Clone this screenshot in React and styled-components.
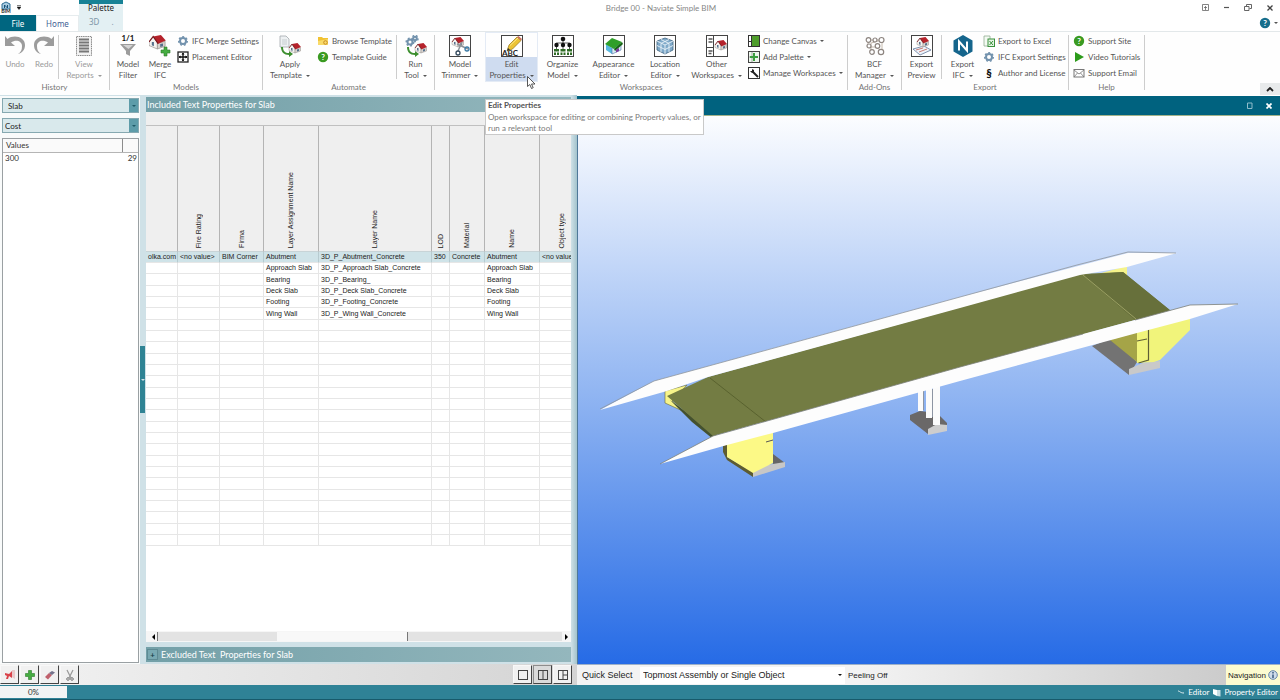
import React, { useState } from "react";
import styled, { createGlobalStyle, css } from "styled-components";

const GlobalStyle = createGlobalStyle`
  * {
    box-sizing: border-box;
  }
  body {
    margin: 0;
    background: #ffffff;
    font-family: Lato, "Open Sans", sans-serif;
    font-size: 8px;
    color: #4a4a4a;
  }
  button, select {
    font: inherit;
    color: inherit;
    border: none;
    background: none;
    padding: 0;
    margin: 0;
  }
  svg {
    display: block;
    flex-shrink: 0;
  }
`;

const Window = styled.div`
  display: flex;
  flex-direction: column;
  height: 100vh;
  overflow: hidden;
`;

/* ---------- title bar and tabs ---------- */

const Header = styled.header`
  display: flex;
  height: 31px;
  flex-shrink: 0;
`;

const HeaderSide = styled.div`
  display: flex;
  flex-direction: column;
  justify-content: space-between;
  width: ${(props) => props.$width}px;
`;

const QuickBar = styled.div`
  display: flex;
  align-items: center;
  gap: 5px;
  height: 15px;
`;

const TabRow = styled.nav`
  display: flex;
  height: 16px;
`;

const Tab = styled.button`
  width: ${(props) => (props.$file ? 36 : 43)}px;
  font-family: "Noto Sans", sans-serif;
  color: ${(props) => (props.$file ? "#ffffff" : "#3f6294")};
  background: ${(props) => (props.$file ? "#006680" : "#ffffff")};
  border: ${(props) => (props.$file ? "none" : "1px solid #e6ecee")};
  border-bottom: none;
`;

const PaletteGroup = styled.div`
  display: flex;
  flex-direction: column;
  width: 44px;
  font-family: "Noto Sans", sans-serif;
  background: #e3f0f3;
  border-top: 4px solid #178296;
`;

const PaletteTitle = styled.span`
  height: 11px;
  line-height: 8px;
  text-align: center;
  color: #222222;
`;

const PaletteTab = styled.button`
  display: flex;
  gap: 12px;
  padding: 4px 10px;
  line-height: 10px;
  color: #7d97a8;
`;

const AppTitle = styled.h1`
  flex: 1;
  margin: 0;
  height: 16px;
  line-height: 16px;
  font-size: 8px;
  font-weight: 400;
  text-align: center;
  color: #868686;
`;

const WindowButtons = styled.div`
  display: flex;
  justify-content: space-between;
  align-items: center;
  height: 15px;
  padding: 0 7px 0 3px;
`;

const HelpRow = styled.div`
  display: flex;
  justify-content: flex-end;
  align-items: center;
  gap: 3px;
  height: 16px;
  padding-right: 2px;
`;

/* ---------- ribbon ---------- */

const Ribbon = styled.div`
  display: flex;
  position: relative;
  height: 64px;
  flex-shrink: 0;
  border-top: 1px solid #e3e8ea;
  background: #fefefe;
`;

const Group = styled.section`
  display: flex;
  flex-direction: column;
  flex-shrink: 0;
  width: ${(props) => props.$width}px;
`;

const GroupBody = styled.div`
  display: flex;
  height: 50px;
`;

const GroupLabel = styled.span`
  line-height: 11px;
  text-align: center;
  color: #757575;
`;

const Divider = styled.div`
  width: 1px;
  height: ${(props) => (props.$short ? 44 : 55)}px;
  margin-top: 3px;
  flex-shrink: 0;
  background: #cdcdcd;
`;

const BigButton = styled.button`
  display: flex;
  flex-direction: column;
  align-items: center;
  flex-shrink: 0;
  width: ${(props) => props.$width}px;
  padding-top: 2px;
  line-height: 11px;
  text-align: center;
  white-space: nowrap;
  color: ${(props) => (props.$muted ? "#9a9a9a" : "#555555")};
  ${(props) =>
    props.$active &&
    css`
      background: linear-gradient(#fefefe 25px, #cfdcf0 25px);
      box-shadow: inset 0 0 0 1px #e4ebf5;
    `}
`;

const BigIcon = styled.span`
  display: flex;
  justify-content: center;
  align-items: center;
  width: 24px;
  height: 24px;
  margin-bottom: 1px;
`;

const Caption = styled.span`
  display: flex;
  align-items: center;
  gap: 4px;
`;

const Stack = styled.div`
  display: flex;
  flex-direction: column;
  padding: 1px 0 0 ${(props) => props.$indent || 0}px;
`;

const SmallButton = styled.button`
  display: flex;
  align-items: center;
  gap: 3px;
  height: 16px;
  white-space: nowrap;
  color: #555555;
`;

const Arrow = styled.i`
  border: 2px solid transparent;
  border-top-color: ${(props) => props.$color || "#555555"};
  border-bottom: none;
`;

const Collapse = styled.button`
  display: flex;
  align-items: center;
  justify-content: center;
  align-self: flex-end;
  margin-left: auto;
  width: 20px;
  height: 12px;
  background: #e8eaeb;
`;

/* ---------- work area ---------- */

const Main = styled.main`
  display: flex;
  flex: 1;
  min-height: 0;
`;

const Workspace = styled.div`
  display: flex;
  flex-direction: column;
  width: 577px;
  flex-shrink: 0;
  background: #cfe1e7;
`;

const Panels = styled.div`
  display: flex;
  flex: 1;
  min-height: 0;
`;

const ValuesPanel = styled.aside`
  display: flex;
  flex-direction: column;
  gap: 5px;
  width: 140px;
  padding: 2px 1px 1px 2px;
  background: #f9fbfb;
  border-top: 1px solid #cfe1e7;
`;

const ComboBox = styled.div`
  display: flex;
  height: 15px;
  border: 1px solid #86a9b1;
  background: #d9e9ec;
`;

const Combo = styled.select`
  appearance: none;
  flex: 1;
  padding-left: ${(props) => props.$indent}px;
  color: #222222;
`;

const ComboArrow = styled.span`
  display: flex;
  align-items: center;
  justify-content: center;
  width: 9px;
  background: #5d9ca9;
`;

const ValuesBox = styled.div`
  flex: 1;
  background: #ffffff;
  border: 1px solid #9aa0a3;
`;

const ValuesTable = styled.table`
  width: 100%;
  border-collapse: collapse;
  color: #333333;
  th {
    height: 13px;
    padding: 0 3px;
    font-weight: 400;
    text-align: left;
    background: #fafafa;
    border-bottom: 1px solid #b5b5b5;
  }
  th + th {
    width: 16px;
    border-left: 1px solid #8c8c8c;
  }
  td {
    height: 11px;
    padding: 0 2px;
  }
  td + td {
    text-align: right;
    padding: 0 1px;
  }
`;

const Splitter = styled.div`
  display: flex;
  align-items: center;
  width: 6px;
  background: ${(props) => (props.$shaded ? "linear-gradient(90deg, #cfe1e7, #a3c3cc)" : "#cfe1e7")};
`;

const SplitHandle = styled.div`
  display: flex;
  align-items: center;
  justify-content: center;
  width: 5px;
  height: 67px;
  background: #2f8394;
`;

const PropertiesPanel = styled.section`
  display: flex;
  flex-direction: column;
  flex: 1;
  min-width: 0;
  padding-top: 2px;
`;

const PanelTitle = styled.h2`
  display: flex;
  align-items: center;
  gap: 3px;
  margin: 0;
  height: 15px;
  padding-left: 1px;
  flex-shrink: 0;
  font-size: 9px;
  font-weight: 400;
  color: #ffffff;
  background: linear-gradient(90deg, #73a0a8, #94b7bd);
`;

const ExpandButton = styled.button`
  width: 11px;
  height: 11px;
  font-size: 8px;
  font-weight: 700;
  line-height: 8px;
  color: #173f48;
  background: #79a9b2;
  border: 1px solid #5e8b94;
`;

const GridArea = styled.div`
  flex: 1;
  min-height: 0;
  overflow: hidden;
  background: #ffffff;
  border-top: 13px solid #efefef;
`;

const PropertyTable = styled.table`
  table-layout: fixed;
  width: 438px;
  border-collapse: separate;
  border-spacing: 0;
  font-family: "Liberation Sans", Arial, sans-serif;
  font-size: 7px;
  color: #222222;
  border-top: 1px solid #c0c0c0;
  tbody tr {
    height: 11px;
  }
  tbody tr:nth-child(3n) {
    height: 12px;
  }
`;

const HeadCell = styled.th`
  width: ${(props) => props.$width}px;
  height: 126px;
  padding: 0 0 3px;
  vertical-align: bottom;
  font-weight: 400;
  background: #efefef;
  border-right: 1px solid #b4b4b4;
  border-bottom: 1px solid #c8d4d7;
`;

const Rotated = styled.span`
  display: block;
  margin: 0 auto;
  writing-mode: vertical-rl;
  transform: rotate(180deg);
  line-height: 10px;
  width: 10px;
  white-space: nowrap;
`;

const Cell = styled.td`
  padding: 0 0 0 2px;
  line-height: 10px;
  white-space: nowrap;
  background: ${(props) => (props.$selected ? "#cfe3e8" : "#ffffff")};
  border-right: 1px solid ${(props) => (props.$selected ? "#b7cbd0" : "#e6e6e6")};
  border-bottom: 1px solid #e6e6e6;
`;

const ScrollBar = styled.div`
  display: flex;
  align-items: center;
  height: 11px;
  padding: 0 1px 0 3px;
  background: #f6f6f6;
`;

const ScrollArrow = styled.button`
  width: 8px;
  height: 9px;
  display: flex;
  align-items: center;
  justify-content: center;
`;

const ScrollTrack = styled.div`
  flex: 1;
  display: flex;
  height: 9px;
  padding: 0 154px 0 119px;
  background: #e3e3e3;
  border-left: 1px solid #777777;
`;

const ScrollThumb = styled.div`
  flex: 1;
  background: #f8f8f8;
  border-right: 1px solid #777777;
`;

const Excluded = styled.div`
  padding: 5px 0 2px;
`;

const BottomBar = styled.div`
  display: flex;
  align-items: center;
  gap: 1px;
  height: 21px;
  padding-right: 5px;
  flex-shrink: 0;
  background: linear-gradient(90deg, #f3f3f3, #d4d4d4);
`;

const ToolButton = styled.button`
  display: flex;
  align-items: center;
  justify-content: center;
  width: 19px;
  height: 19px;
  background: ${(props) => (props.$pressed ? "#dadada" : "#f1f1f1")};
  border: 1px solid ${(props) => (props.$pressed ? "#8d8d8d" : "#f8f8f8")};
  border-right-color: #444444;
  border-bottom-color: #444444;
`;

const Spacer = styled.div`
  flex: 1;
`;

const Viewer = styled.section`
  display: flex;
  flex-direction: column;
  flex: 1;
  min-width: 0;
  padding-top: 1px;
`;

const ViewerTitle = styled.div`
  display: flex;
  align-items: center;
  justify-content: flex-end;
  gap: 13px;
  height: 20px;
  padding-right: 8px;
  flex-shrink: 0;
  background: #00627f;
  border-bottom: 1px solid #a3b38a;
`;

const Canvas = styled.div`
  flex: 1;
  min-height: 0;
  background: linear-gradient(#fcfdff, #92b6f2 50%, #266be6);
  border-left: 1px solid #4f7899;
  svg {
    width: 100%;
    height: 100%;
  }
`;

const ViewerBar = styled.div`
  display: flex;
  align-items: center;
  height: 21px;
  flex-shrink: 0;
  padding-left: 5px;
  border-top: 1px solid #9db0c8;
  font-family: "Liberation Sans", Arial, sans-serif;
  color: #222222;
  background: linear-gradient(90deg, #f3f3f3 40%, #c6c6c6);
`;

const QuickLabel = styled.label`
  width: 58px;
  font-size: 9px;
`;

const QuickBox = styled.div`
  display: flex;
  align-items: center;
  width: 205px;
  height: 17px;
  margin-right: 3px;
  padding-right: 3px;
  background: #ffffff;
`;

const QuickSelect = styled.select`
  appearance: none;
  flex: 1;
  padding-left: 3px;
  font-size: 9px;
`;

const NavButton = styled.button`
  display: flex;
  align-items: center;
  justify-content: center;
  gap: 2px;
  width: 54px;
  height: 20px;
  margin-left: auto;
  background: #fcfbd0;
`;

const StatusBar = styled.footer`
  display: flex;
  align-items: center;
  gap: 3px;
  height: 15px;
  flex-shrink: 0;
  padding-right: 2px;
  color: #ffffff;
  background: #2f8296;
  border-bottom: 1px solid #175a6b;
`;

const Progress = styled.div`
  width: 67px;
  height: 12px;
  line-height: 12px;
  text-align: center;
  color: #333333;
  background: #f2f4f4;
`;

const Tooltip = styled.div`
  position: absolute;
  left: 485px;
  top: 67px;
  width: 219px;
  padding-left: 2px;
  z-index: 2;
  line-height: 11px;
  white-space: nowrap;
  color: #7a7a7a;
  background: #ffffff;
  border: 1px solid #c9c9c9;
  strong {
    display: block;
    margin-bottom: 1px;
    color: #555555;
  }
`;

const Pointer = styled.span`
  position: absolute;
  left: 527px;
  top: 44px;
  z-index: 3;
`;

/* ---------- icons ---------- */

const House = ({ x = 0, y = 0 }) => (
  <g transform={`translate(${x} ${y})`}>
    <path d="M0 5l3-3.500 3 4V10L0 7.500z" fill="#f6f3f0" stroke="#96908d" strokeWidth=".5" />
    <path d="M6 6l5.500-1.500V8L6 10z" fill="#d8d2ce" stroke="#96908d" strokeWidth=".5" />
    <path d="M3 1l5.500-1L12 4 6.500 6.200z" fill="#b5222b" />
    <path d="M0 5l3-4 3.500 5.200" fill="none" stroke="#7a141b" strokeWidth=".8" />
    <path d="M2 5h1.500v3L2 7.300zM8 6.500l2-.5v2l-2 .6z" fill="#55708c" />
  </g>
);

const GreenArrow = () => (
  <path d="M4 12c0 4 2 6 6 6v-2l4 3-4 3v-2c-5 0-8-3-8-8z" fill="#3d8f2f" />
);

const Plus = ({ x, y }) => (
  <path
    transform={`translate(${x} ${y})`}
    d="M3 0h3v3h3v3H6v3H3V6H0V3h3z"
    fill="#46ad42"
    stroke="#2b7a2a"
    strokeWidth=".6"
  />
);

const Gear = ({ x = 6, y = 6, r = 3.5, color = "#7292ad" }) => (
  <g fill="none" stroke={color}>
    <circle cx={x} cy={y} r={r} strokeWidth="2" />
    <circle cx={x} cy={y} r={r + 1.3} strokeWidth="1.400" strokeDasharray="1.900 1.900" />
  </g>
);

const Svg22 = ({ framed, children }) => (
  <svg width="22" height="22" viewBox="0 0 22 22">
    {framed && <rect x=".5" y=".5" width="21" height="21" fill="#fff" stroke="#444" />}
    {children}
  </svg>
);

const Svg12 = ({ children }) => (
  <svg width="12" height="12" viewBox="0 0 12 12">
    {children}
  </svg>
);

const UndoIcon = ({ flip }) => (
  <Svg22>
    <g transform={flip ? "translate(22 0) scale(-1 1)" : undefined}>
      <path d="M1 1l2.500 3C10-1 21 2 21 10c0 5-3 8-7 9 3-2 4-4 4-8 0-5-6-7-11-3.500l4 3.500H1z" fill="#9c9c9c" />
    </g>
  </Svg22>
);

const ReportIcon = () => (
  <Svg22>
    <rect x="3.500" y="1.500" width="15" height="19" fill="#f2f2f2" stroke="#8b8b8b" strokeDasharray="1.500 .7" />
    <path d="M6 4.500h10M6 7.500h10M6 10.500h10M6 13.500h10M6 16.500h10" stroke="#777" strokeWidth="1.800" />
  </Svg22>
);

const FilterIcon = () => (
  <Svg22>
    <text x="11" y="6" textAnchor="middle" fontSize="8" fontWeight="700" fill="#111">1/1</text>
    <path d="M3 9h16l-6 7v5l-4-2v-3z" fill="#9c9c9c" />
    <path d="M6 10h10l-4.500 4z" fill="#d4d4d4" />
  </Svg22>
);

const MergeIcon = () => (
  <Svg22>
    <g transform="scale(1.400)"><House x={0} y={0} /></g>
    <Plus x={12} y={12} />
  </Svg22>
);

const ApplyIcon = () => (
  <Svg22>
    <path d="M1 1h6l3 3v8H1z" fill="#eef1f3" stroke="#a3a9ad" strokeWidth=".8" />
    <path d="M3 5h5M3 7h5M3 9h5" stroke="#b5bdc2" strokeWidth=".7" />
    <GreenArrow />
    <House x={10} y={8} />
  </Svg22>
);

const RunIcon = () => (
  <Svg22>
    <Gear x={5} y={7} r={2.5} />
    <Gear x={10} y={3.5} r={1.8} />
    <GreenArrow />
    <House x={10} y={8} />
  </Svg22>
);

const TrimmerIcon = () => (
  <Svg22 framed>
    <House x={3} y={2} />
    <path d="M9 16l4-9M19 14L8 9" stroke="#8b9298" strokeWidth="1.500" />
    <circle cx="9" cy="18" r="2" fill="none" stroke="#344a5e" strokeWidth="1.300" />
    <circle cx="18" cy="14" r="2" fill="none" stroke="#3c7ba6" strokeWidth="1.300" />
  </Svg22>
);

const EditIcon = () => (
  <Svg22 framed>
    <text x="1" y="20.500" fontSize="8" fontWeight="700" fill="#222">ABC</text>
    <path d="M6 16l2-6 8-8 4 3.500-8.500 8.500z" fill="#ecc336" stroke="#94741a" strokeWidth=".7" />
    <path d="M16 2l4 3.500 1-1.500-3.500-3z" fill="#c96f5c" />
    <path d="M9 10.500L17 3" stroke="#fbe88d" />
    <path d="M6 16l1-3 2 1.800z" fill="#333" />
  </Svg22>
);

const OrganizeIcon = () => (
  <Svg22 framed>
    <path d="M11 4v12M4.500 15v-7h13v7" stroke="#333" strokeWidth=".8" fill="none" />
    <circle cx="11" cy="4" r="2.300" fill="#111" />
    <circle cx="4.500" cy="10" r="2.200" fill="#111" />
    <circle cx="11" cy="10" r="2.200" fill="#111" />
    <circle cx="17.500" cy="10" r="2.200" fill="#111" />
    <path d="M2 14h5v2.500H2zM8.500 14h5v2.500h-5zM15 14h5v2.500h-5zM2 17.500h2V20H2zM5 17.500h2V20H5zM8.500 17.500h2V20h-2zM11.500 17.500h2V20h-2zM15 17.500h2V20h-2zM18 17.500h2V20h-2z" fill="#2f6b25" />
  </Svg22>
);

const AppearanceIcon = () => (
  <Svg22 framed>
    <path d="M3 9l6 4v6l-6-4z" fill="#5ab9e0" />
    <path d="M9 13l9-4v6l-9 4z" fill="#d9eaf4" stroke="#4972a5" strokeWidth=".6" />
    <path d="M2 9l7-6 10 4-8 7z" fill="#2f9f28" />
    <path d="M11 14l8-7 1 2-8 7z" fill="#176414" />
    <path d="M13 14.500l3-1.500v3l-3 1.500z" fill="#7c3b9c" />
  </Svg22>
);

const LocationIcon = () => (
  <Svg22 framed>
    <path d="M11 3l8 3v9l-8 4-8-4V6z" fill="#7fa9c9" stroke="#3d627f" strokeWidth=".8" />
    <path d="M3 6l8 4 8-4M11 10v9M7 4.500l8 4v8.500M15 4.500l-8 4v8.500M3 10.500l8 4 8-4" stroke="#eaf3f8" strokeWidth=".9" fill="none" />
  </Svg22>
);

const OtherIcon = () => (
  <Svg22 framed>
    <path d="M7.500 1v20M1 12.500h7" stroke="#444" />
    <path d="M2.500 4h4M2.500 7h4M2.500 16h4M2.500 18.500h3" stroke="#555" strokeWidth="1.500" />
    <House x={9} y={5} />
  </Svg22>
);

const BcfIcon = () => (
  <Svg22>
    <g fill="#fff" stroke="#8d8580" strokeWidth="1.200">
      <path d="M4 5h14v12M4 5v7h10M7 17V8l11-3" stroke="#b9a99a" strokeWidth=".8" fill="none" />
      <circle cx="4.500" cy="5" r="2.300" />
      <circle cx="11" cy="5" r="2" />
      <circle cx="17.500" cy="5" r="2.500" />
      <circle cx="5" cy="11" r="2" />
      <circle cx="13.500" cy="11" r="2.300" />
      <circle cx="8" cy="17" r="2.300" />
      <circle cx="17" cy="17" r="2.700" />
    </g>
  </Svg22>
);

const PreviewIcon = () => (
  <Svg22 framed>
    <path d="M2 14l11-3 7 4-11 5z" fill="#eef3fa" stroke="#62789b" strokeWidth=".8" />
    <House x={6} y={2} />
    <path d="M5 15l7-2M8 17l8-3" stroke="#b8473a" strokeWidth=".7" />
  </Svg22>
);

const NaviateIcon = () => (
  <Svg22>
    <path d="M11 0l9.500 5.500v11L11 22l-9.500-5.500v-11z" fill="#15658c" />
    <path d="M7 15.500v-9l8 9v-9" fill="none" stroke="#fff" strokeWidth="2" />
  </Svg22>
);

const GearIcon = () => (
  <Svg12><Gear r={3} /></Svg12>
);

const MoveIcon = () => (
  <Svg12>
    <rect x="1" y="1" width="10" height="10" fill="#fff" stroke="#222" strokeWidth="1.300" />
    <path d="M6 2v8M2 6h8" stroke="#111" strokeWidth="1.300" />
    <path d="M4.500 3.500L6 1.700l1.500 1.800zM4.500 8.500L6 10.300l1.500-1.800zM3.500 4.500L1.700 6l1.800 1.500zM8.500 4.500L10.300 6 8.500 7.500z" />
  </Svg12>
);

const FolderIcon = () => (
  <Svg12>
    <path d="M1 2h4l1 1h5v7H1z" fill="#f1c232" />
    <path d="M1 6l10-2v6H1z" fill="#f8da6a" />
    <circle cx="8.500" cy="7.500" r="1.800" fill="none" stroke="#c98a22" />
  </Svg12>
);

const HelpIcon = ({ color = "#3a9a21" }) => (
  <Svg12>
    <circle cx="6" cy="6" r="5.200" fill={color} />
    <text x="6" y="9" textAnchor="middle" fontSize="8" fontWeight="700" fill="#fff">?</text>
  </Svg12>
);

const CanvasIcon = () => (
  <Svg12>
    <rect x=".5" y=".5" width="11" height="11" fill="#fff" stroke="#333" />
    <path d="M4 1h7v10H4z" fill="#4e9d2b" />
    <path d="M3.500 1v10M1 6.500h2" stroke="#333" />
  </Svg12>
);

const AddPaletteIcon = () => (
  <Svg12>
    <rect x=".5" y=".5" width="11" height="11" fill="#eef7ed" stroke="#444" />
    <path d="M4 1v10M1 6h3" stroke="#777" strokeWidth=".6" />
    <path d="M6 2v8M2 6h8" stroke="#3d9e41" strokeWidth="2" />
  </Svg12>
);

const WrenchIcon = () => (
  <Svg12>
    <rect x=".5" y=".5" width="11" height="11" fill="#fff" stroke="#333" />
    <path d="M4 4l6 6" stroke="#222" strokeWidth="2" />
    <path d="M2 4l2 2 2-1V3L4 2v2z" fill="#222" />
  </Svg12>
);

const ExcelIcon = () => (
  <Svg12>
    <path d="M1 1h6v10H1z" fill="#f4faf3" stroke="#92ad92" strokeWidth=".8" />
    <rect x="5" y="4" width="6.500" height="7.500" fill="#e4f4e2" stroke="#398f3c" />
    <path d="M6.500 6l3.500 4M10 6L6.500 10" stroke="#398f3c" />
  </Svg12>
);

const SectionIcon = () => (
  <Svg12>
    <text x="6" y="9.500" textAnchor="middle" fontSize="11" fontWeight="900" fill="#111">§</text>
  </Svg12>
);

const PlayIcon = () => (
  <Svg12><path d="M2 1l9 5-9 5z" fill="#2c9b1b" /></Svg12>
);

const MailIcon = () => (
  <Svg12>
    <rect x="1" y="2.500" width="10" height="7.500" fill="#fff" stroke="#777" />
    <path d="M1 3l5 4 5-4M1 10l3.500-4M11 10L7.500 6" fill="none" stroke="#777" strokeWidth=".8" />
  </Svg12>
);

const LayoutIcon = ({ lines }) => (
  <Svg12>
    <rect x="1.500" y="1.500" width="9" height="9" fill="none" stroke="#444" />
    <path d={lines} stroke="#444" fill="none" />
  </Svg12>
);

const Bridge = () => (
  <svg viewBox="578 116 702 548" preserveAspectRatio="xMidYMid meet" role="img" aria-label="Bridge model">
    {/* far right abutment and footing */}
    <path d="M1092 346l20-8 25 24-8 13z" fill="#737373" />
    <path d="M1129 369l14-6 17-2v7l-31 7z" fill="#c9c9c9" />
    <path d="M1110 340l27-8v30z" fill="#a5a447" />
    <path d="M1137 331l53-13v12l-30 30-6 2-17 1z" fill="#f1f47b" />
    <path d="M1148.500 329v31l-10 3M1137 341l10-2" stroke="#5e5e35" strokeWidth="1.200" fill="none" />
    <path d="M1098 274l29-8v9z" fill="#f5f38a" />
    {/* pier */}
    <path d="M910 415l10-4 17 2 10 10v3l-19 8-18-14z" fill="#6a6868" />
    <path d="M928 429l9-5 10 1v6l-19 4z" fill="#cdcdcd" />
    <path d="M918 388h5v23h-5zM926 387h6v31h-6zM933 385h7v40h-7z" fill="#fbfbfb" />
    <path d="M923.500 390v20M932.500 389v28" stroke="#8d95a3" />
    {/* near left abutment */}
    <path d="M773 454l12 9-12 4z" fill="#666" />
    <path d="M753 472l14-7 18-3v5l-32 10z" fill="#c7c7c7" />
    <path d="M723 446l4-2v13l26 15v5l-26-17-4-8z" fill="#5c5b32" />
    <path d="M727 443l46-12v32l-6 3-14 7-26-16z" fill="#fcf986" />
    <path d="M766 442l7-2" stroke="#555" />
    {/* deck */}
    <path d="M665 391l22-6-15 16 13 11-20-9z" fill="#f7f48a" stroke="#6a6a33" strokeWidth=".6" />
    <path d="M670 400l22 22 21 17 4-4z" fill="#44512f" />
    <path d="M667 396l41-19 372-103 43-2 48 39-36 9-368 101-54 15z" fill="#737c43" />
    <path d="M1083 275l40-3 48 39-36 9z" fill="#67703b" />
    <path d="M710 378l56 44" stroke="#59622f" />
    <path d="M1083 275l53 44" stroke="#9ba063" />
    {/* parapets */}
    <path d="M600 410l54-29 306-84 168-44 49 0-50 14-47 8-120 33-252 69-41 14z" fill="#fdfdfd" />
    <path d="M600 409l54-28 306-84 117-32 51-13 48 1" fill="none" stroke="#8f969c" strokeWidth=".8" />
    <path d="M660 464l53-28 54-15 193-54 123-33 52-14 55-15 48-1-48 15-53 14-177 48-187 52-46 12z" fill="#fdfdfd" />
    <path d="M713 436l54-15 193-54 123-33M1135 320l55-15 48-1M660 464l53-28" fill="none" stroke="#7b7f79" strokeWidth=".8" />
  </svg>
);

/* ---------- data ---------- */

const columns = [
  { name: "", width: 32 },
  { name: "Fire Rating", width: 42 },
  { name: "Firma", width: 44 },
  { name: "Layer Assignment Name", width: 55 },
  { name: "Layer Name", width: 113 },
  { name: "LOD", width: 18 },
  { name: "Material", width: 35 },
  { name: "Name", width: 55 },
  { name: "Object type", width: 44 },
];

const rows = [
  ["olka.com", "<no value>", "BIM Corner", "Abutment", "3D_P_Abutment_Concrete", "350", "Concrete", "Abutment", "<no value>"],
  ["", "", "", "Approach Slab", "3D_P_Approach Slab_Concrete", "", "", "Approach Slab", ""],
  ["", "", "", "Bearing", "3D_P_Bearing_", "", "", "Bearing", ""],
  ["", "", "", "Deck Slab", "3D_P_Deck Slab_Concrete", "", "", "Deck Slab", ""],
  ["", "", "", "Footing", "3D_P_Footing_Concrete", "", "", "Footing", ""],
  ["", "", "", "Wing Wall", "3D_P_Wing Wall_Concrete", "", "", "Wing Wall", ""],
];

while (rows.length < 26) rows.push(columns.map(() => ""));

const Big = ({ icon, lines, arrow, ...rest }) => (
  <BigButton {...rest}>
    <BigIcon>{icon}</BigIcon>
    {lines.map((line, i) => (
      <Caption key={line}>
        {line}
        {arrow && i === lines.length - 1 && <Arrow $color={rest.$muted && "#9a9a9a"} />}
      </Caption>
    ))}
  </BigButton>
);

const Small = ({ icon, text, arrow }) => (
  <SmallButton>
    {icon}
    {text}
    {arrow && <Arrow />}
  </SmallButton>
);

const RibbonBar = () => (
  <Ribbon>
    <Group $width={109}>
      <GroupBody>
        <Big $width={30} $muted icon={<UndoIcon />} lines={["Undo"]} />
        <Big $width={28} $muted icon={<UndoIcon flip />} lines={["Redo"]} />
        <Divider $short />
        <Big $width={50} $muted icon={<ReportIcon />} lines={["View", "Reports"]} arrow />
      </GroupBody>
      <GroupLabel>History</GroupLabel>
    </Group>
    <Divider />
    <Group $width={152}>
      <GroupBody>
        <Big $width={36} icon={<FilterIcon />} lines={["Model", "Filter"]} />
        <Big $width={28} icon={<MergeIcon />} lines={["Merge", "IFC"]} />
        <Stack $indent={3}>
          <Small icon={<GearIcon />} text="IFC Merge Settings" />
          <Small icon={<MoveIcon />} text="Placement Editor" />
        </Stack>
      </GroupBody>
      <GroupLabel>Models</GroupLabel>
    </Group>
    <Divider />
    <Group $width={171}>
      <GroupBody>
        <Big $width={54} icon={<ApplyIcon />} lines={["Apply", "Template"]} arrow />
        <Stack>
          <Small icon={<FolderIcon />} text="Browse Template" />
          <Small icon={<HelpIcon />} text="Template Guide" />
        </Stack>
        <Spacer />
        <Divider $short />
        <Big $width={37} icon={<RunIcon />} lines={["Run", "Tool"]} arrow />
      </GroupBody>
      <GroupLabel>Automate</GroupLabel>
    </Group>
    <Divider />
    <Group $width={412}>
      <GroupBody>
        <Big $width={50} icon={<TrimmerIcon />} lines={["Model", "Trimmer"]} arrow />
        <Big $width={53} $active icon={<EditIcon />} lines={["Edit", "Properties"]} arrow />
        <Big $width={49} icon={<OrganizeIcon />} lines={["Organize", "Model"]} arrow />
        <Big $width={53} icon={<AppearanceIcon />} lines={["Appearance", "Editor"]} arrow />
        <Big $width={50} icon={<LocationIcon />} lines={["Location", "Editor"]} arrow />
        <Big $width={53} icon={<OtherIcon />} lines={["Other", "Workspaces"]} arrow />
        <Stack $indent={5}>
          <Small icon={<CanvasIcon />} text="Change Canvas" arrow />
          <Small icon={<AddPaletteIcon />} text="Add Palette" arrow />
          <Small icon={<WrenchIcon />} text="Manage Workspaces" arrow />
        </Stack>
      </GroupBody>
      <GroupLabel>Workspaces</GroupLabel>
    </Group>
    <Divider />
    <Group $width={53}>
      <GroupBody>
        <Big $width={53} icon={<BcfIcon />} lines={["BCF", "Manager"]} arrow />
      </GroupBody>
      <GroupLabel>Add-Ons</GroupLabel>
    </Group>
    <Divider />
    <Group $width={166}>
      <GroupBody>
        <Big $width={39} icon={<PreviewIcon />} lines={["Export", "Preview"]} />
        <Divider $short />
        <Big $width={41} icon={<NaviateIcon />} lines={["Export", "IFC"]} arrow />
        <Stack>
          <Small icon={<ExcelIcon />} text="Export to Excel" />
          <Small icon={<GearIcon />} text="IFC Export Settings" />
          <Small icon={<SectionIcon />} text="Author and License" />
        </Stack>
      </GroupBody>
      <GroupLabel>Export</GroupLabel>
    </Group>
    <Divider />
    <Group $width={75}>
      <GroupBody>
        <Stack $indent={4}>
          <Small icon={<HelpIcon />} text="Support Site" />
          <Small icon={<PlayIcon />} text="Video Tutorials" />
          <Small icon={<MailIcon />} text="Support Email" />
        </Stack>
      </GroupBody>
      <GroupLabel>Help</GroupLabel>
    </Group>
    <Divider />
    <Collapse aria-label="Collapse ribbon">
      <svg width="8" height="5" viewBox="0 0 8 5">
        <path d="M1 4l3-3 3 3" fill="none" stroke="#222" strokeWidth="1.800" />
      </svg>
    </Collapse>
    <Tooltip role="tooltip">
      <strong>Edit Properties</strong>
      Open workspace for editing or combining Property values, or
      <br />
      run a relevant tool
    </Tooltip>
    <Pointer>
      <svg width="9" height="13" viewBox="0 0 9 13">
        <path d="M.5.5v10l2.300-2 1.700 4 1.700-.8-1.700-3.700h3.500z" fill="#fff" stroke="#444" strokeWidth=".9" />
      </svg>
    </Pointer>
  </Ribbon>
);

const App = () => {
  const [category, setCategory] = useState("Slab");
  const [property, setProperty] = useState("Cost");

  return (
    <Window>
      <GlobalStyle />
      <Header>
        <HeaderSide $width={79}>
          <QuickBar>
            <svg width="12" height="13" viewBox="0 0 12 13">
              <path d="M6 1l4 2v5H2V3z" fill="#a9cbe0" stroke="#2d6d94" />
              <path d="M4.500 7V4l3 3V4" fill="none" stroke="#15527a" />
              <text x="6" y="12" textAnchor="middle" fontSize="5" fontWeight="700" fill="#222">BIM</text>
            </svg>
            <svg width="4" height="5" viewBox="0 0 4 5">
              <path d="M0 .5h4M0 2l2 2.500L4 2z" stroke="#333" strokeWidth=".6" />
            </svg>
          </QuickBar>
          <TabRow>
            <Tab $file>File</Tab>
            <Tab>Home</Tab>
          </TabRow>
        </HeaderSide>
        <PaletteGroup>
          <PaletteTitle>Palette</PaletteTitle>
          <PaletteTab>
            <span>3D</span>
            <span>.</span>
          </PaletteTab>
        </PaletteGroup>
        <AppTitle>Bridge 00 - Naviate Simple BIM</AppTitle>
        <HeaderSide $width={81}>
          <WindowButtons>
            <svg width="7" height="7" viewBox="0 0 7 7" fill="none" stroke="#666">
              <path d="M.5.5h6v6h-6zM3.500 2v4M2 3.500h3" strokeWidth=".8" />
            </svg>
            <svg width="5" height="7" viewBox="0 0 5 7"><path d="M0 3.500h5" stroke="#555" strokeWidth="1.200" /></svg>
            <svg width="8" height="7" viewBox="0 0 8 7" fill="none" stroke="#555" strokeWidth=".9">
              <path d="M.5 2.500h4.500v4H.5zM2.500 2V.5h5v4H5.500" />
            </svg>
            <svg width="6" height="6" viewBox="0 0 6 6"><path d="M.5.5l5 5M5.500.5l-5 5" stroke="#444" strokeWidth="1.300" /></svg>
          </WindowButtons>
          <HelpRow>
            <HelpIcon color="#176e8c" />
            <Arrow />
          </HelpRow>
        </HeaderSide>
      </Header>

      <RibbonBar />

      <Main>
        <Workspace>
          <Panels>
            <ValuesPanel>
              <ComboBox>
                <Combo $indent={5} aria-label="Category" value={category} onChange={(e) => setCategory(e.target.value)}>
                  <option>Slab</option>
                </Combo>
                <ComboArrow><Arrow $color="#1f5a68" /></ComboArrow>
              </ComboBox>
              <ComboBox>
                <Combo $indent={2} aria-label="Property" value={property} onChange={(e) => setProperty(e.target.value)}>
                  <option>Cost</option>
                </Combo>
                <ComboArrow><Arrow $color="#1f5a68" /></ComboArrow>
              </ComboBox>
              <ValuesBox>
                <ValuesTable>
                  <thead>
                    <tr>
                      <th>Values</th>
                      <th />
                    </tr>
                  </thead>
                  <tbody>
                    <tr>
                      <td>300</td>
                      <td>29</td>
                    </tr>
                  </tbody>
                </ValuesTable>
              </ValuesBox>
            </ValuesPanel>
            <Splitter>
              <SplitHandle><Arrow $color="#cfe1e7" /></SplitHandle>
            </Splitter>
            <PropertiesPanel>
              <PanelTitle>Included Text Properties for Slab</PanelTitle>
              <GridArea>
                <PropertyTable>
                  <thead>
                    <tr>
                      {columns.map((col) => (
                        <HeadCell key={col.name} $width={col.width}>
                          <Rotated>{col.name}</Rotated>
                        </HeadCell>
                      ))}
                    </tr>
                  </thead>
                  <tbody>
                    {rows.map((row, i) => (
                      <tr key={i}>
                        {row.map((value, j) => (
                          <Cell key={j} $selected={i === 0}>
                            {value}
                          </Cell>
                        ))}
                      </tr>
                    ))}
                  </tbody>
                </PropertyTable>
              </GridArea>
              <ScrollBar>
                <ScrollArrow aria-label="Scroll left">
                  <svg width="3" height="6" viewBox="0 0 3 6"><path d="M3 0v6L0 3z" /></svg>
                </ScrollArrow>
                <ScrollTrack>
                  <ScrollThumb />
                </ScrollTrack>
                <ScrollArrow aria-label="Scroll right">
                  <svg width="3" height="6" viewBox="0 0 3 6"><path d="M0 0v6l3-3z" /></svg>
                </ScrollArrow>
              </ScrollBar>
              <Excluded>
                <PanelTitle>
                  <ExpandButton aria-label="Expand">+</ExpandButton>
                  Excluded Text&nbsp; Properties for Slab
                </PanelTitle>
              </Excluded>
            </PropertiesPanel>
            <Splitter $shaded />
          </Panels>
          <BottomBar>
            <ToolButton aria-label="Announce">
              <Svg12>
                <path d="M1 4l4 1 3-3v7L5 7 4 10H2l1-3-2-1z" fill="#d9434b" />
                <path d="M8 1h3v9L8 8z" fill="#e9c9ca" />
              </Svg12>
            </ToolButton>
            <ToolButton aria-label="Add">
              <Svg12><Plus x={1.5} y={1.5} /></Svg12>
            </ToolButton>
            <ToolButton aria-label="Erase">
              <Svg12>
                <path d="M1 8l4-4 3 2-4 4.500z" fill="#c0606c" />
                <path d="M5 4l3-2 3 1.500L8 6z" fill="#74738c" />
              </Svg12>
            </ToolButton>
            <ToolButton aria-label="Cut">
              <Svg12>
                <path d="M3 1l4 8M9 1L5 9" stroke="#999" strokeWidth="1.200" />
                <circle cx="4" cy="10" r="1.300" fill="none" stroke="#777" />
                <circle cx="8" cy="10" r="1.300" fill="none" stroke="#777" />
              </Svg12>
            </ToolButton>
            <Spacer />
            <ToolButton aria-label="Single view"><LayoutIcon /></ToolButton>
            <ToolButton $pressed aria-label="Split view"><LayoutIcon lines="M6 1.500v9" /></ToolButton>
            <ToolButton aria-label="Triple view"><LayoutIcon lines="M6 1.500v9M6 6h4.500" /></ToolButton>
          </BottomBar>
        </Workspace>

        <Viewer>
          <ViewerTitle>
            <svg width="6" height="7" viewBox="0 0 6 7"><path d="M.5 1h4.500v5.500H.5z" fill="none" stroke="#8fbccb" /></svg>
            <svg width="6" height="6" viewBox="0 0 6 6"><path d="M.5.5l5 5M5.500.5l-5 5" stroke="#fff" strokeWidth="1.700" /></svg>
          </ViewerTitle>
          <Canvas>
            <Bridge />
          </Canvas>
          <ViewerBar>
            <QuickLabel htmlFor="quick-select">Quick Select</QuickLabel>
            <QuickBox>
              <QuickSelect id="quick-select" defaultValue="top">
                <option value="top">Topmost Assembly or Single Object</option>
              </QuickSelect>
              <Arrow $color="#111111" />
            </QuickBox>
            Peeling Off
            <NavButton>
              Navigation
              <svg width="10" height="10" viewBox="0 0 10 10">
                <circle cx="5" cy="5" r="4.300" fill="#cfdcea" stroke="#6787a8" />
                <path d="M5 2v1.500M5 4.500V8" stroke="#2b4f78" strokeWidth="1.400" />
              </svg>
            </NavButton>
          </ViewerBar>
        </Viewer>
      </Main>

      <StatusBar>
        <Progress>0%</Progress>
        <Spacer />
        <svg width="8" height="6" viewBox="0 0 8 6"><path d="M1 2c2 0 2 2 6 2" fill="none" stroke="#e5f1f4" /></svg>
        <span>Editor</span>
        <svg width="9" height="9" viewBox="0 0 9 9">
          <path d="M1 1l4 1v6L1 6z" fill="#fff" />
          <path d="M5 2h3.500v6.500L5 8z" fill="#c5dde3" />
        </svg>
        <span>Property Editor</span>
      </StatusBar>
    </Window>
  );
};

export default App;
